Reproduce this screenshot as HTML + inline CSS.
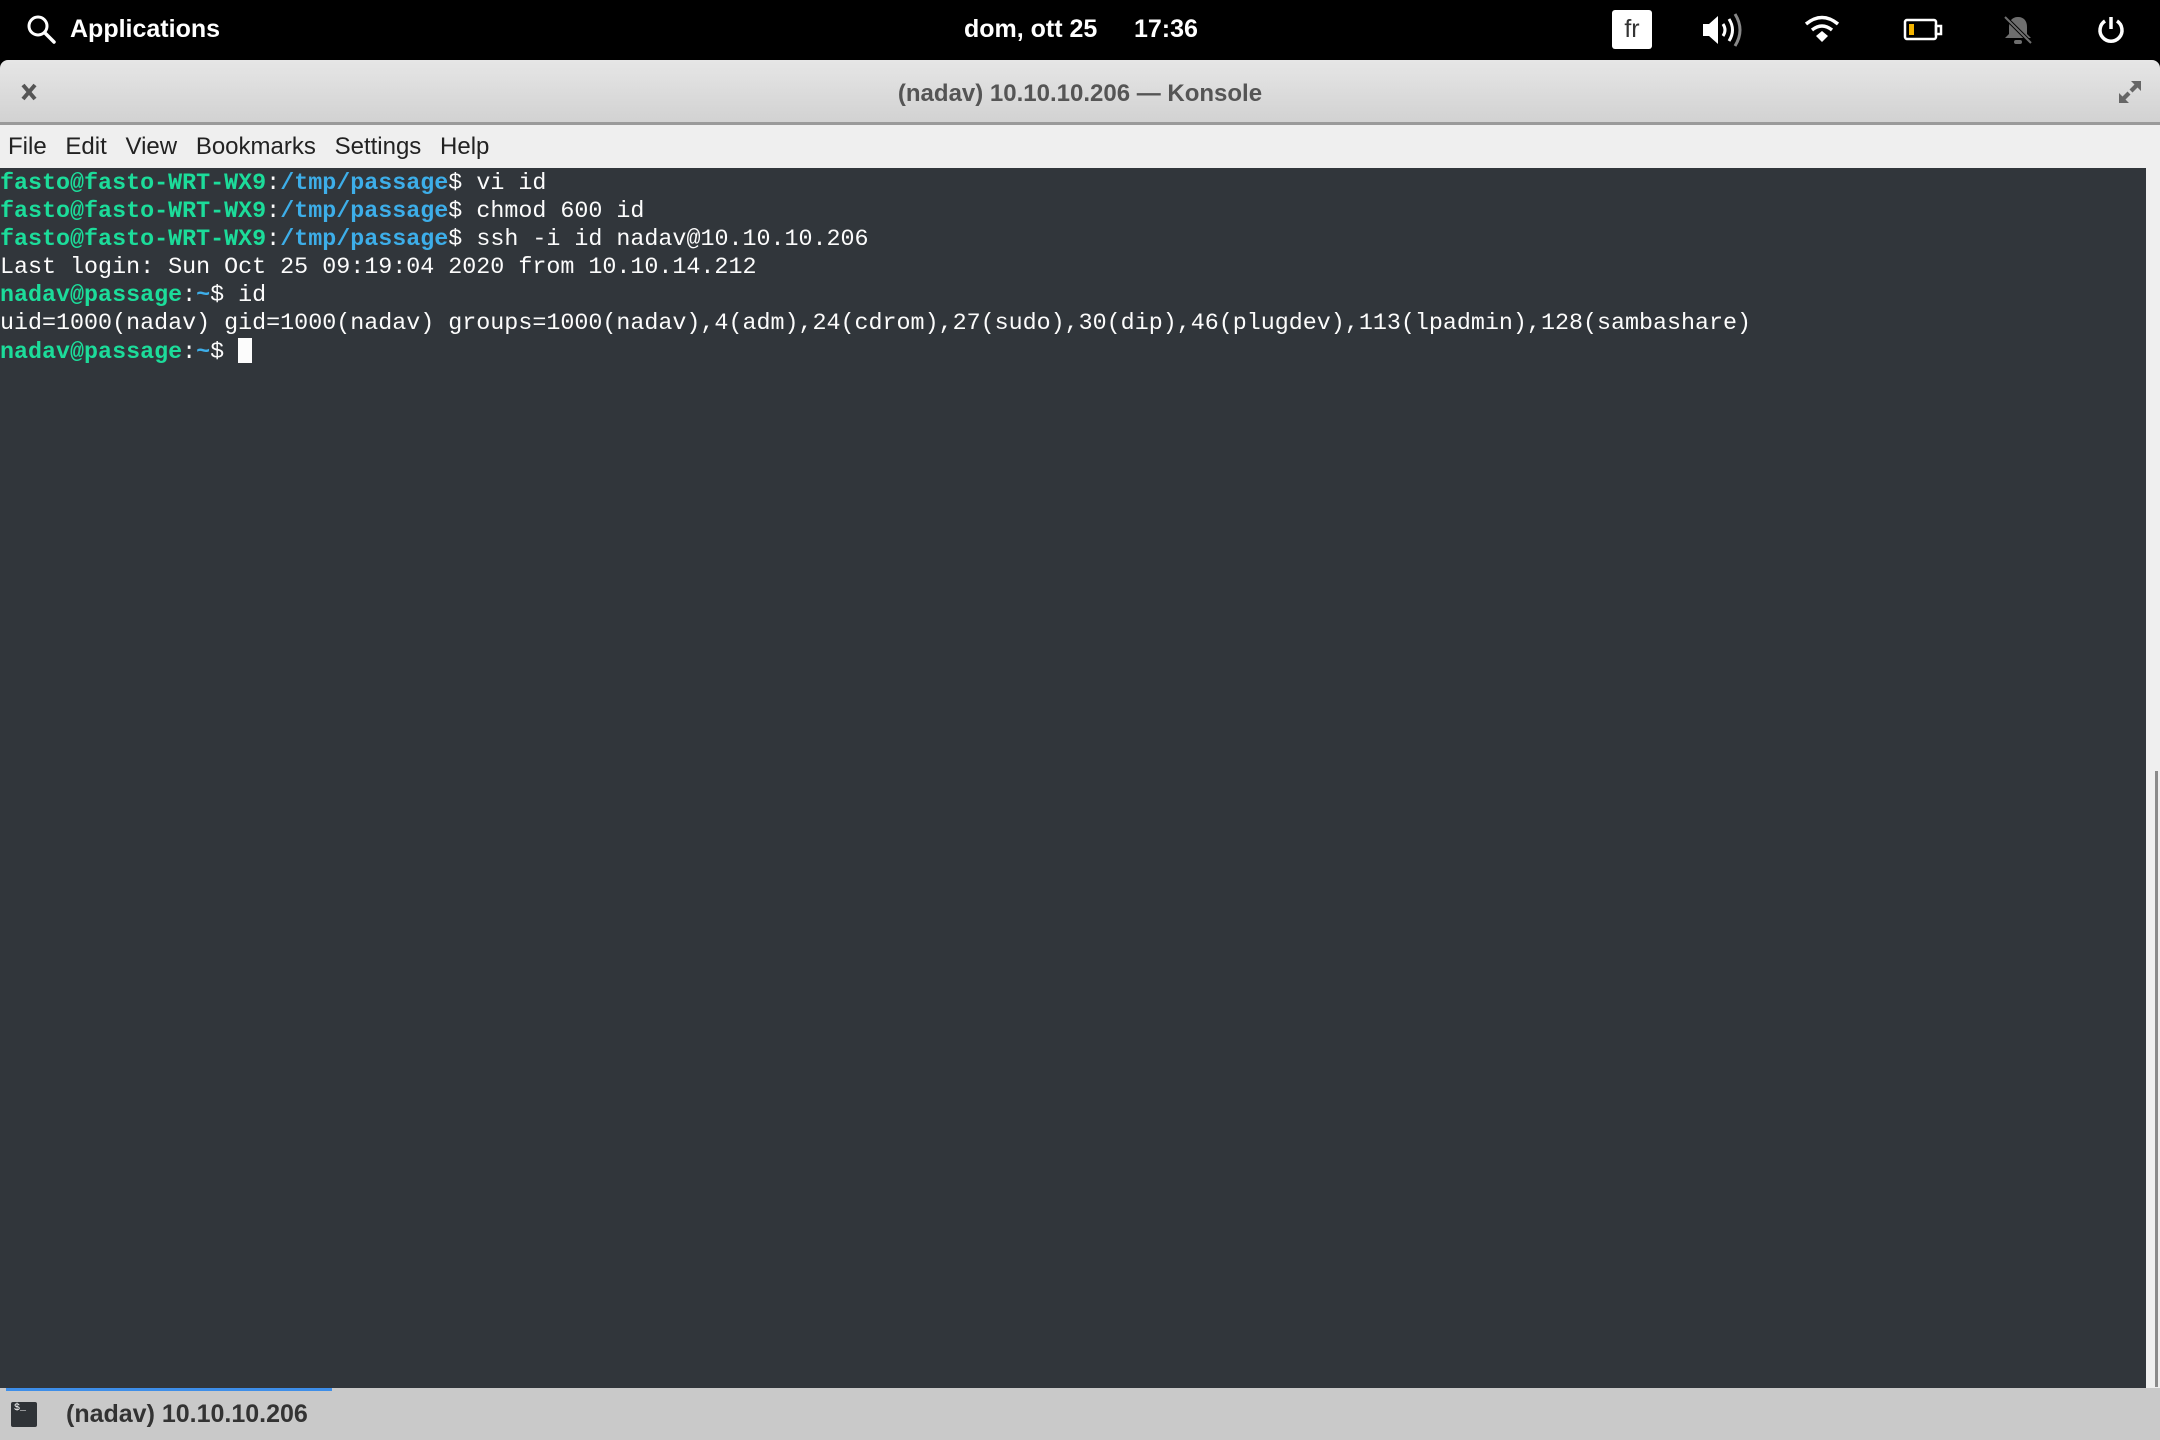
<!DOCTYPE html>
<html><head><meta charset="utf-8"><style>
*{margin:0;padding:0;box-sizing:border-box}
body{width:2160px;height:1440px;overflow:hidden;background:#000;font-family:"Liberation Sans",sans-serif;position:relative}
.abs{position:absolute}
#top{left:0;top:0;width:2160px;height:60px;background:#000;color:#fff}
#title{left:0;top:60px;width:2160px;height:65px;background:linear-gradient(#e6e6e6,#d2d2d2);border-bottom:3px solid #9a9a9a;border-radius:8px 8px 0 0}
#menu{left:0;top:125px;width:2160px;height:43px;background:#efefef;font-size:24px;color:#222}
#term{left:0;top:168px;width:2146px;height:1220px;background:#31363b;font-family:"Liberation Mono",monospace;font-size:23.35px;line-height:28px;color:#fcfcfc;white-space:pre;padding-top:2px}
#sb{left:2146px;top:168px;width:14px;height:1220px;background:#efefef}
#task{left:0;top:1388px;width:2160px;height:52px;background:#c9c9c9}
.g{color:#1cdc9a;font-weight:bold}.b{color:#3daee9;font-weight:bold}
</style></head><body>
<div id="top" class="abs">
 <svg class="abs" style="left:26px;top:14px" width="32" height="32" viewBox="0 0 32 32"><circle cx="12" cy="12" r="9" fill="none" stroke="#fff" stroke-width="3"/><path d="M19 19l9 9" stroke="#fff" stroke-width="3.5" stroke-linecap="round"/></svg>
 <div class="abs" style="left:70px;top:15px;font-size:25px;font-weight:bold">Applications</div>
 <div class="abs" style="left:964px;top:15px;font-size:25px;font-weight:bold">dom, ott 25</div>
 <div class="abs" style="left:1134px;top:15px;font-size:25px;font-weight:bold">17:36</div>
 <div class="abs" style="left:1612px;top:10px;width:40px;height:39px;background:#fff;border-radius:3px;color:#333;font-size:25px;text-align:center;line-height:39px">fr</div>
 <svg class="abs" style="left:1700px;top:12px" width="44" height="36" viewBox="0 0 44 36"><path d="M3 12h6l9-8v28l-9-8H3z" fill="#fff"/><path d="M23 12q4 6 0 12" stroke="#fff" stroke-width="3" fill="none"/><path d="M29 7q7 11 0 22" stroke="#fff" stroke-width="3" fill="none"/><path d="M35 2q10 16 0 32" stroke="#888" stroke-width="3" fill="none"/></svg>
 <svg class="abs" style="left:1803px;top:14px" width="38" height="30" viewBox="0 0 38 30"><path d="M3 10q16-13 32 0" stroke="#fff" stroke-width="3.5" fill="none"/><path d="M9 16q10-8 20 0" stroke="#fff" stroke-width="3.5" fill="none"/><path d="M13 22l6-5 6 5-6 6z" fill="#fff"/></svg>
 <svg class="abs" style="left:1903px;top:17px" width="42" height="26" viewBox="0 0 42 26"><rect x="2" y="3" width="31" height="19" rx="2" fill="none" stroke="#fff" stroke-width="2.5"/><rect x="33" y="9" width="5" height="8" fill="none" stroke="#fff" stroke-width="2.5"/><rect x="6" y="7" width="5" height="11" fill="#f4b400"/></svg>
 <svg class="abs" style="left:2002px;top:14px" width="32" height="32" viewBox="0 0 32 32"><path d="M16 3c-6 0-9 4-9 10v7l-4 4h26l-4-4v-7c0-6-3-10-9-10z" fill="#6e6e6e"/><rect x="12" y="26" width="8" height="4" rx="2" fill="#6e6e6e"/><path d="M3 3l26 26" stroke="#000" stroke-width="4"/><path d="M3 3l26 26" stroke="#6e6e6e" stroke-width="2"/></svg>
 <svg class="abs" style="left:2096px;top:14px" width="30" height="32" viewBox="0 0 30 32"><path d="M9 7a11 11 0 1 0 12 0" stroke="#fff" stroke-width="3.5" fill="none"/><path d="M15 3v12" stroke="#fff" stroke-width="3.5"/></svg>
</div>
<div id="title" class="abs">
 <svg class="abs" style="left:20px;top:22px" width="18" height="20" viewBox="0 0 18 20"><path d="M3 3l12 14M15 3L3 17" stroke="#555" stroke-width="4"/></svg>
 <div class="abs" style="left:0;width:2160px;top:20px;text-align:center;font-size:24px;color:#555;font-weight:600">(nadav) 10.10.10.206 — Konsole</div>
 <svg class="abs" style="left:2116px;top:18px" width="28" height="28" viewBox="0 0 28 28"><path d="M15 3h10v10l-3.5-3.5-5 5-3-3 5-5zM13 25H3V15l3.5 3.5 5-5 3 3-5 5z" fill="#666"/></svg>
</div>
<div id="menu" class="abs">
 <div class="abs" style="left:8px;top:8px;word-spacing:2.7px">File&nbsp; Edit&nbsp; View&nbsp; Bookmarks&nbsp; Settings&nbsp; Help</div>
</div>
<div id="term" class="abs"><span class="g">fasto@fasto-WRT-WX9</span>:<span class="b">/tmp/passage</span>$ vi id
<span class="g">fasto@fasto-WRT-WX9</span>:<span class="b">/tmp/passage</span>$ chmod 600 id
<span class="g">fasto@fasto-WRT-WX9</span>:<span class="b">/tmp/passage</span>$ ssh -i id nadav@10.10.10.206
Last login: Sun Oct 25 09:19:04 2020 from 10.10.14.212
<span class="g">nadav@passage</span>:<span class="b">~</span>$ id
uid=1000(nadav) gid=1000(nadav) groups=1000(nadav),4(adm),24(cdrom),27(sudo),30(dip),46(plugdev),113(lpadmin),128(sambashare)
<span class="g">nadav@passage</span>:<span class="b">~</span>$ <span style="display:inline-block;width:14px;height:25px;background:#fcfcfc;vertical-align:-5px"></span></div>
<div id="sb" class="abs"><div class="abs" style="left:9px;top:603px;width:3px;height:616px;background:#8a8a8a"></div></div>
<div id="task" class="abs">
 <div class="abs" style="left:6px;top:0;width:326px;height:3px;background:#3d8ee9"></div>
 <div class="abs" style="left:11px;top:14px;width:26px;height:25px;background:#2f3337;border-radius:2px;color:#fff;font-size:10px;font-family:'Liberation Mono',monospace;padding:2px 3px;line-height:10px">$_</div>
 <div class="abs" style="left:66px;top:12px;font-size:25px;font-weight:bold;color:#333">(nadav) 10.10.10.206</div>
</div>
</body></html>
